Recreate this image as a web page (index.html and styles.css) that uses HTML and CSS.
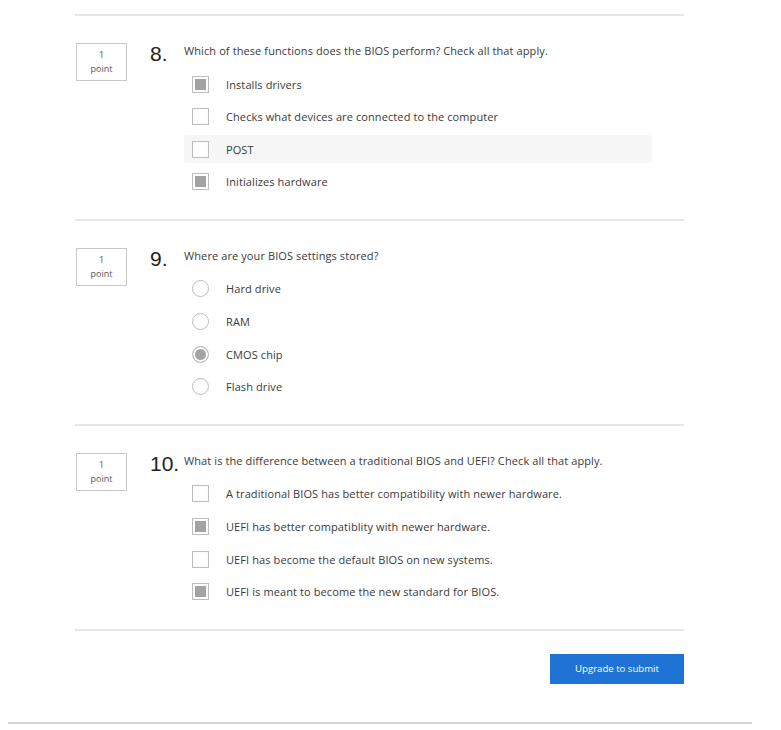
FILE: index.html
```html
<!DOCTYPE html>
<html>
<head>
<meta charset="utf-8">
<link rel="stylesheet" href="styles.css">
</head>
<body>
<div class="page">
  <div class="quiz">
    <div class="question">
      <div class="points"><span>1</span><span>point</span></div>
      <div class="num">8.</div>
      <div class="body">
        <div class="prompt">Which of these functions does the BIOS perform? Check all that apply.</div>
        <div class="options">
          <div class="opt"><span class="box checked"></span><span class="label">Installs drivers</span></div>
          <div class="opt"><span class="box"></span><span class="label">Checks what devices are connected to the computer</span></div>
          <div class="opt hover"><span class="box"></span><span class="label">POST</span></div>
          <div class="opt"><span class="box checked"></span><span class="label">Initializes hardware</span></div>
        </div>
      </div>
    </div>
    <div class="question">
      <div class="points"><span>1</span><span>point</span></div>
      <div class="num">9.</div>
      <div class="body">
        <div class="prompt">Where are your BIOS settings stored?</div>
        <div class="options">
          <div class="opt"><span class="radio"></span><span class="label">Hard drive</span></div>
          <div class="opt"><span class="radio"></span><span class="label">RAM</span></div>
          <div class="opt"><span class="radio checked"></span><span class="label">CMOS chip</span></div>
          <div class="opt"><span class="radio"></span><span class="label">Flash drive</span></div>
        </div>
      </div>
    </div>
    <div class="question">
      <div class="points"><span>1</span><span>point</span></div>
      <div class="num">10.</div>
      <div class="body">
        <div class="prompt">What is the difference between a traditional BIOS and UEFI? Check all that apply.</div>
        <div class="options">
          <div class="opt"><span class="box"></span><span class="label">A traditional BIOS has better compatibility with newer hardware.</span></div>
          <div class="opt"><span class="box checked"></span><span class="label">UEFI has better compatiblity with newer hardware.</span></div>
          <div class="opt"><span class="box"></span><span class="label">UEFI has become the default BIOS on new systems.</span></div>
          <div class="opt"><span class="box checked"></span><span class="label">UEFI is meant to become the new standard for BIOS.</span></div>
        </div>
      </div>
    </div>
    <div class="actions">
      <button class="submit">Upgrade to submit</button>
    </div>
  </div>
  <div class="footer-line"></div>
</div>
</body>
</html>
```
FILE: styles.css
```css
html, body {
  margin: 0;
  padding: 0;
  background: #fff;
}
body {
  margin: 8px;
  font-family: "Open Sans", "DejaVu Sans", sans-serif;
  color: #3a3a3a;
}
.page {
  width: 744px;
  padding-top: 6px;
}
.quiz {
  margin-left: 67px;
  width: 609px;
  border-top: 2px solid #e6e6e6;
}
.question {
  display: flex;
  padding: 27px 0 23px 0;
  border-bottom: 2px solid #e6e6e6;
}
.points {
  margin-left: 1px;
  width: 49px;
  height: 36px;
  border: 1px solid #c8c8c8;
  display: flex;
  flex-direction: column;
  align-items: center;
  justify-content: center;
  font-size: 9px;
  line-height: 14px;
  color: #555;
}
.num {
  margin-left: 23px;
  width: 34px;
  font-family: "Liberation Sans", Arial, sans-serif;
  font-size: 21px;
  line-height: 20px;
  color: #222;
  margin-top: 1px;
}
.body {
  flex: 1;
  display: flex;
  flex-direction: column;
}
.prompt {
  font-size: 11px;
  letter-spacing: 0.1px;
  line-height: 16px;
  color: #3a3a3a;
  margin-bottom: 11px;
}
.options {
  display: flex;
  flex-direction: column;
  gap: 4.67px;
  width: 468px;
}
.opt {
  height: 28px;
  display: flex;
  align-items: center;
  padding-left: 8px;
  border-radius: 3px;
  font-size: 11px;
  letter-spacing: 0.1px;
}
.opt.hover {
  background: #f7f7f7;
}
.box {
  width: 15px;
  height: 15px;
  border: 1px solid #bdbdbd;
  background: #fff;
  box-sizing: content-box;
  flex: none;
  box-shadow: inset 0 0 2px rgba(0,0,0,0.05);
}
.box.checked {
  background: #a3a3a3;
  border-color: #bdbdbd;
  box-shadow: inset 0 0 0 2px #fff;
}
.radio {
  width: 15px;
  height: 15px;
  border: 1px solid #bdbdbd;
  border-radius: 50%;
  background: #fff;
  flex: none;
}
.radio.checked {
  background: #a3a3a3;
  box-shadow: inset 0 0 0 2px #fff;
}
.label {
  margin-left: 17px;
  color: #3a3a3a;
}
.actions {
  display: flex;
  justify-content: flex-end;
  padding-top: 23px;
  padding-bottom: 38px;
}
.submit {
  width: 134px;
  height: 30px;
  border: none;
  background: #1f73d4;
  color: #fff;
  font-family: "Open Sans", sans-serif;
  font-size: 9.6px;
  cursor: pointer;
  padding: 0;
}
.footer-line {
  border-top: 2px solid #d6d6d6;
}
```
